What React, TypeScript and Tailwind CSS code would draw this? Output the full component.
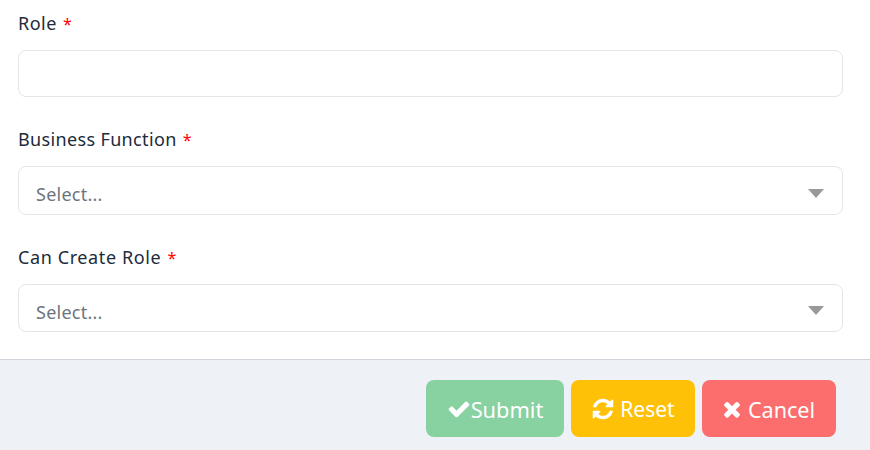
const font = 'font-["Noto_Sans","Open_Sans",sans-serif]'

function Label({ text, className }: { text: string; className: string }) {
  return (
    <label className={`block text-[18px] leading-[26px] text-[#212b3b] ${className}`}>
      {text} <span className="ml-[1px] text-[16px] leading-none text-[#ff0000]">*</span>
    </label>
  )
}

function SelectBox({ box, arrow }: { box: string; arrow: string }) {
  return (
    <div className={`flex items-end justify-between rounded-[8px] border border-[#e2e5ea] bg-white pl-[17px] pr-[18px] ${box}`}>
      <span className="text-[18px] leading-[26px] tracking-[0.25px] text-[#6c757d]">Select...</span>
      <span className={`h-0 w-0 border-x-[8px] border-t-[9px] border-x-transparent border-t-[#999999] ${arrow}`} />
    </div>
  )
}

function Fa({ d }: { d: string }) {
  return (
    <svg viewBox="0 0 1792 1792" className="h-6 w-6 fill-current">
      <path d={d} />
    </svg>
  )
}

const check = 'M1671 566q0 40-28 68l-724 724-136 136q-28 28-68 28t-68-28l-136-136-362-362q-28-28-28-68t28-68l136-136q28-28 68-28t68 28l294 295 656-657q28-28 68-28t68 28l136 136q28 28 28 68z'
const refresh = 'M1639 1056q0 5-1 7-64 268-268 434.5t-478 166.5q-146 0-282.5-55t-243.5-157l-129 129q-19 19-45 19t-45-19-19-45v-448q0-26 19-45t45-19h448q26 0 45 19t19 45-19 45l-137 137q71 66 161 102t187 36q134 0 250-65t186-179q11-17 53-117 8-23 30-23h192q13 0 22.5 9.5t9.5 22.5zm25-800v448q0 26-19 45t-45 19h-448q-26 0-45-19t-19-45 19-45l138-138q-148-137-349-137-134 0-250 65t-186 179q-11 17-53 117-8 23-30 23h-199q-13 0-22.5-9.5t-9.5-22.5v-7q65-268 270-434.5t480-166.5q146 0 284 55.5t245 156.5l130-129q19-19 45-19t45 19 19 45z'
const times = 'M1490 1322q0 40-28 68l-136 136q-28 28-68 28t-68-28l-294-294-294 294q-28 28-68 28t-68-28l-136-136q-28-28-28-68t28-68l294-294-294-294q-28-28-28-68t28-68l136-136q28-28 68-28t68 28l294 294 294-294q28-28 68-28t68 28l136 136q28 28 28 68t-28 68l-294 294 294 294q28 28 28 68z'

export default function App() {
  return (
    <div className={`flex h-[450px] w-[870px] flex-col overflow-hidden bg-white ${font}`}>
      <div className="h-[359px] px-[18px] pr-[27px]">
        <Label text="Role" className="pt-[10px] tracking-[0.5px]" />
        <div className="mt-[14px] h-[47px] rounded-[8px] border border-[#e2e5ea] bg-white" />
        <Label text="Business Function" className="mt-[29px] tracking-[0.35px]" />
        <div className="mt-[14px]">
          <SelectBox box="h-[49px] pb-[7px]" arrow="mb-[9px]" />
        </div>
        <Label text="Can Create Role" className="mt-[29px] tracking-[0.6px]" />
        <div className="mt-[14px]">
          <SelectBox box="h-[48px] pb-[6px]" arrow="mb-[10px]" />
        </div>
      </div>
      <div className="flex flex-1 items-start justify-end gap-[7px] border-t border-[#ced4da] bg-[#eef1f5] pr-[34px] pt-[20px]">
        <button className="flex h-[57px] w-[138px] items-center justify-center rounded-[8px] bg-[#88d1a1] text-[21.8px] text-white">
          <Fa d={check} />
          <span className="pt-[3px]">Submit</span>
        </button>
        <button className="flex h-[57px] w-[124px] items-center justify-center gap-[5px] rounded-[8px] bg-[#ffc107] text-[21px] text-white">
          <Fa d={refresh} />
          <span className="pt-[3px]">Reset</span>
        </button>
        <button className="flex h-[57px] w-[134px] items-center justify-center gap-[4px] rounded-[8px] bg-[#fc6d6d] pr-[3px] text-[21.6px] text-white">
          <Fa d={times} />
          <span className="pt-[3px]">Cancel</span>
        </button>
      </div>
    </div>
  )
}
